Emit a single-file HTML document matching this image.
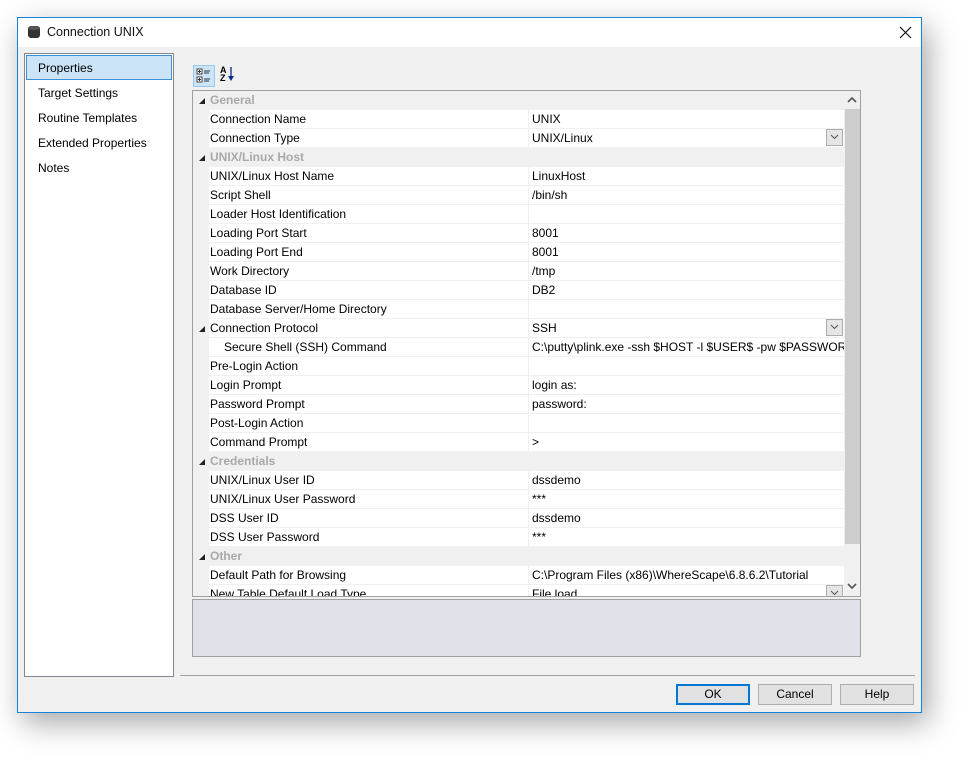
<!DOCTYPE html>
<html><head><meta charset="utf-8"><style>
*{box-sizing:border-box;margin:0;padding:0}
body{width:970px;height:761px;background:#fff;font-family:"Liberation Sans",sans-serif;font-size:12px;color:#000;position:relative;overflow:hidden}
.abs{position:absolute}
#win{left:17px;top:17px;width:905px;height:696px;border:1px solid #1883d7;background:#f0f0f0;box-shadow:6px 10px 28px rgba(0,0,0,.35)}
.row{position:absolute;left:0;width:651px;height:19px;}
.row .l{position:absolute;left:16px;top:0;width:319px;height:18px;background:#fff;line-height:18px;padding-left:1px;white-space:nowrap;overflow:hidden}
.row .v{position:absolute;left:336px;top:0;width:315px;height:18px;background:#fff;line-height:18px;padding-left:3px;white-space:nowrap;overflow:hidden}
.row.cat{background:#f0f0f0}
.row.cat .c{position:absolute;left:17px;top:0;line-height:18px;color:#a9a9a9;font-weight:bold}
.tri{position:absolute;left:6px;top:7px;width:0;height:0;border-left:6px solid transparent;border-bottom:6px solid #222}
.dd{position:absolute;right:1px;top:0;width:17px;height:17px;border:1px solid #adadad;background:#e5e5e5}
.dd svg{position:absolute;left:3px;top:4px}
.btn{position:absolute;top:684px;width:74px;height:21px;border:1px solid #adadad;background:#e1e1e1;text-align:center;line-height:19px}
</style></head><body>
<div id="win" class="abs"></div>
<div class="abs" style="left:18px;top:18px;width:903px;height:29px;background:#fff"></div>
<svg class="abs" style="left:27px;top:25px" width="14" height="14"><rect x="1" y="1" width="12" height="12" rx="3" fill="#333"/><ellipse cx="7" cy="3" rx="6" ry="2" fill="#555"/></svg>
<div class="abs" style="left:47px;top:25px;font-size:12.5px;color:#111">Connection UNIX</div>
<svg class="abs" style="left:899px;top:26px" width="13" height="13"><path d="M1 1L12 12M12 1L1 12" stroke="#111" stroke-width="1.2"/></svg>

<div class="abs" style="left:24px;top:53px;width:150px;height:624px;background:#fff;border:1px solid #828790"></div>
<div class="abs" style="left:26px;top:55px;width:146px;height:25px;background:#cce4f7;border:1px solid #3c8edb"></div>
<div class="abs" style="left:38px;top:61px">Properties</div>
<div class="abs" style="left:38px;top:86px">Target Settings</div>
<div class="abs" style="left:38px;top:111px">Routine Templates</div>
<div class="abs" style="left:38px;top:136px">Extended Properties</div>
<div class="abs" style="left:38px;top:161px">Notes</div>

<div class="abs" style="left:193px;top:65px;width:22px;height:22px;background:#cce4f7;border:1px solid #99c9ef"></div>
<svg class="abs" style="left:196px;top:68px" width="16" height="16"><rect x="1" y="1" width="5" height="5" fill="#fff" stroke="#444"/><rect x="1" y="9" width="5" height="5" fill="#fff" stroke="#444"/><path d="M2 3.5h3M3.5 2v3M2 11.5h3M3.5 10v3M8 3h6M8 5h5M8 11h6M8 13h5" stroke="#333"/></svg>
<div class="abs" style="left:220px;top:66px;font-size:9px;line-height:8px;font-weight:bold">A<br>Z</div>
<svg class="abs" style="left:227px;top:66px" width="8" height="16"><path d="M4 1v11" stroke="#0b2a8e" stroke-width="1.3"/><path d="M1 10l3 5 3-5z" fill="#0b2a8e"/></svg>

<div class="abs" style="left:192px;top:90px;width:669px;height:507px;border:1px solid #a0a0a0;background:#f0f0f0;overflow:hidden">
<div class="abs" style="left:0;top:0;width:651px;height:505px;overflow:hidden">
<div class="row cat" style="top:0"><div class="tri"></div><span class="c">General</span></div>
<div class="row" style="top:19px"><div class="l">Connection Name</div><div class="v">UNIX</div></div>
<div class="row" style="top:38px"><div class="l">Connection Type</div><div class="v">UNIX/Linux<div class="dd"><svg width="9" height="6"><path d="M1 1l3.5 3.5L8 1" stroke="#555" fill="none"/></svg></div></div></div>
<div class="row cat" style="top:57px"><div class="tri"></div><span class="c">UNIX/Linux Host</span></div>
<div class="row" style="top:76px"><div class="l">UNIX/Linux Host Name</div><div class="v">LinuxHost</div></div>
<div class="row" style="top:95px"><div class="l">Script Shell</div><div class="v">/bin/sh</div></div>
<div class="row" style="top:114px"><div class="l">Loader Host Identification</div><div class="v"></div></div>
<div class="row" style="top:133px"><div class="l">Loading Port Start</div><div class="v">8001</div></div>
<div class="row" style="top:152px"><div class="l">Loading Port End</div><div class="v">8001</div></div>
<div class="row" style="top:171px"><div class="l">Work Directory</div><div class="v">/tmp</div></div>
<div class="row" style="top:190px"><div class="l">Database ID</div><div class="v">DB2</div></div>
<div class="row" style="top:209px"><div class="l">Database Server/Home Directory</div><div class="v"></div></div>
<div class="row" style="top:228px"><div class="tri"></div><div class="l">Connection Protocol</div><div class="v">SSH<div class="dd"><svg width="9" height="6"><path d="M1 1l3.5 3.5L8 1" stroke="#555" fill="none"/></svg></div></div></div>
<div class="row" style="top:247px"><div class="l" style="padding-left:15px">Secure Shell (SSH) Command</div><div class="v">C:\putty\plink.exe -ssh $HOST -l $USER$ -pw $PASSWORD$</div></div>
<div class="row" style="top:266px"><div class="l">Pre-Login Action</div><div class="v"></div></div>
<div class="row" style="top:285px"><div class="l">Login Prompt</div><div class="v">login as:</div></div>
<div class="row" style="top:304px"><div class="l">Password Prompt</div><div class="v">password:</div></div>
<div class="row" style="top:323px"><div class="l">Post-Login Action</div><div class="v"></div></div>
<div class="row" style="top:342px"><div class="l">Command Prompt</div><div class="v">&gt;</div></div>
<div class="row cat" style="top:361px"><div class="tri"></div><span class="c">Credentials</span></div>
<div class="row" style="top:380px"><div class="l">UNIX/Linux User ID</div><div class="v">dssdemo</div></div>
<div class="row" style="top:399px"><div class="l">UNIX/Linux User Password</div><div class="v">***</div></div>
<div class="row" style="top:418px"><div class="l">DSS User ID</div><div class="v">dssdemo</div></div>
<div class="row" style="top:437px"><div class="l">DSS User Password</div><div class="v">***</div></div>
<div class="row cat" style="top:456px"><div class="tri"></div><span class="c">Other</span></div>
<div class="row" style="top:475px"><div class="l">Default Path for Browsing</div><div class="v">C:\Program Files (x86)\WhereScape\6.8.6.2\Tutorial</div></div>
<div class="row" style="top:494px"><div class="l">New Table Default Load Type</div><div class="v">File load<div class="dd"><svg width="9" height="6"><path d="M1 1l3.5 3.5L8 1" stroke="#555" fill="none"/></svg></div></div></div>
</div>
<div class="abs" style="left:651px;top:0;width:16px;height:505px;background:#f0f0f0"></div>
<svg class="abs" style="left:654px;top:5px" width="10" height="7"><path d="M1 6l4-4 4 4" stroke="#555" stroke-width="1.6" fill="none"/></svg>
<div class="abs" style="left:652px;top:18px;width:15px;height:435px;background:#cdcdcd"></div>
<svg class="abs" style="left:654px;top:492px" width="10" height="7"><path d="M1 1l4 4 4-4" stroke="#555" stroke-width="1.6" fill="none"/></svg>
</div>

<div class="abs" style="left:192px;top:599px;width:669px;height:58px;background:#dfe1e8;border:1px solid #a0a0a0"></div>
<div class="abs" style="left:180px;top:675px;width:735px;height:1px;background:#a0a0a0"></div>
<div class="btn" style="left:676px;border:2px solid #0078d7;line-height:17px">OK</div>
<div class="btn" style="left:758px">Cancel</div>
<div class="btn" style="left:840px">Help</div>
</body></html>
